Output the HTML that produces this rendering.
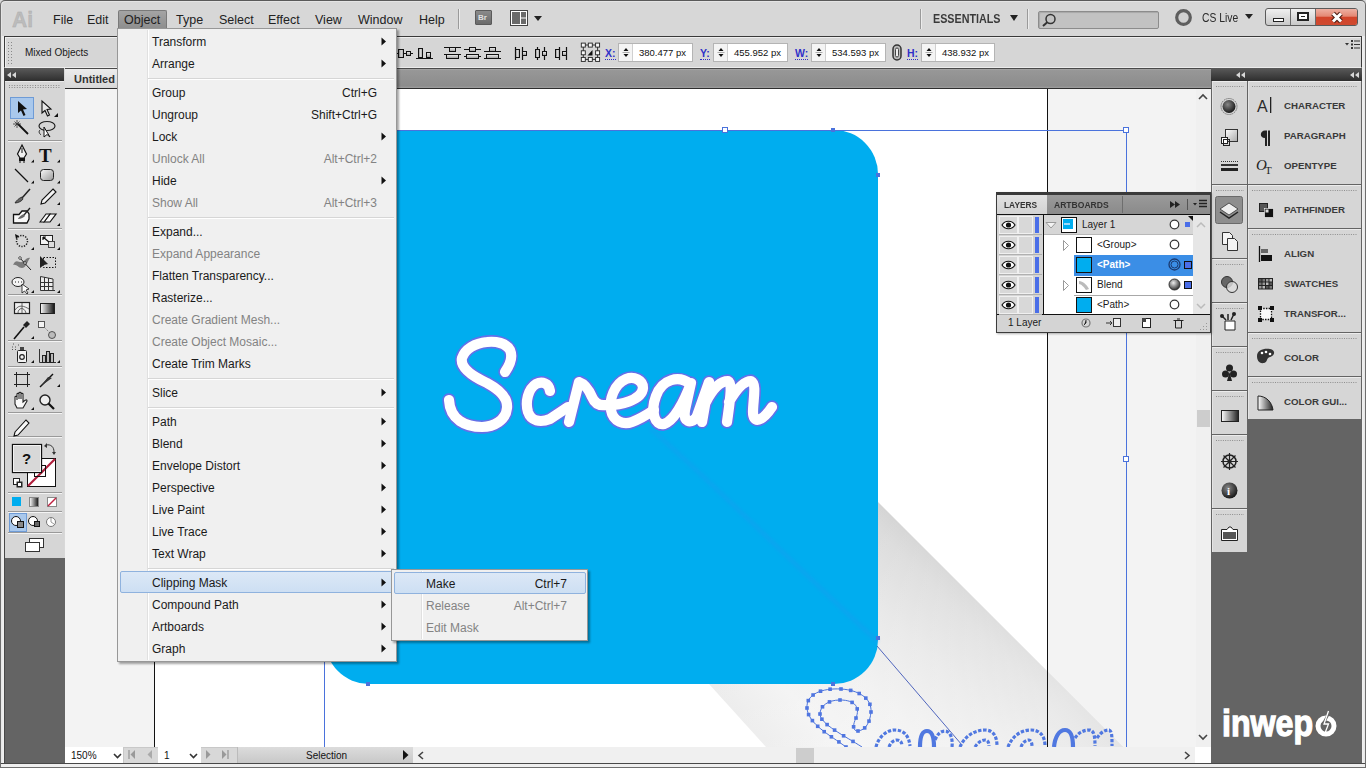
<!DOCTYPE html>
<html><head><meta charset="utf-8">
<style>
*{margin:0;padding:0;box-sizing:border-box}
html,body{width:1366px;height:768px;overflow:hidden;background:#d8d8d8;font-family:"Liberation Sans",sans-serif;font-size:12px;color:#1a1a1a}
.a{position:absolute}
.t{position:absolute;white-space:nowrap;line-height:1}
svg{position:absolute;overflow:visible}
.mt{font-size:12px;line-height:12px}
.rl{font-size:9.7px;line-height:10px;font-weight:bold;color:#3a3a3a}
/* frame */
#frame{left:0;top:0;width:1366px;height:768px;border:1px solid #6e6e6e;border-top-color:#5a5a5a;border-radius:5px 5px 0 0}
#menubar{left:1px;top:1px;width:1364px;height:35px;background:#d7d7d7;border-radius:5px 5px 0 0;box-shadow:inset 0 1px 0 #e4e4e4,inset 1px 0 0 #e4e4e4}
.mi{position:absolute;top:14px;font-size:12.5px;color:#222;line-height:13px}
#ctrl{left:4px;top:36px;width:1358px;height:32px;background:#d6d6d6;border:1px solid #3a3a3a;border-bottom:1px solid #ececec;box-shadow:inset 1px 1px 0 #eeeeee}
.fld{position:absolute;top:43px;height:19px;background:#fff;border:1px solid #b4b4b4}
.spin{position:absolute;left:0;top:0;width:14px;height:17px;border-right:1px solid #d0d0d0;background:#f4f4f4}
.fv{position:absolute;top:4px;font-size:9.5px;color:#111;line-height:10px}
.lbl{position:absolute;top:48px;font-size:10.5px;font-weight:bold;color:#3030c8;line-height:10px;border-bottom:1px dotted #3030c8;padding-bottom:1px}
#tabstrip{left:65px;top:68px;width:1146px;height:21px;background:linear-gradient(#a8a8a8 0,#979797 8%,#8c8c8c 90%,#a0a0a0 100%);border-top:1px solid #4a4a4a;border-bottom:1px solid #2e2e2e}
#tab{left:65px;top:69px;width:60px;height:19px;background:linear-gradient(#ececec,#d8d8d8)}
#ltools_hdr{left:5px;top:68px;width:59px;height:13px;background:linear-gradient(#5a5a5a,#2e2e2e)}
#ltools{left:5px;top:81px;width:59px;height:477px;background:#d6d6d6;border-top:1px solid #eaeaea}
#ldark{left:5px;top:558px;width:60px;height:205px;background:#646464}
#lstrip{left:1px;top:36px;width:4px;height:728px;background:linear-gradient(90deg,#e6e6e6,#f2f2f2);border-right:1px solid #484848}
#paste{left:65px;top:89px;width:1131px;height:658px;background:#f3f3f3}
#artboard{left:154px;top:89px;width:894px;height:658px;background:#fff;border-left:1px solid #111;border-right:1px solid #111}
#status{left:65px;top:747px;width:1146px;height:16px;background:#d8d8d8;border-top:1px solid #c8c8c8}
#rhdr{left:1211px;top:68px;width:151px;height:13px;background:linear-gradient(#5a5a5a,#2e2e2e)}
#rdark{left:1211px;top:81px;width:151px;height:682px;background:#646464}
#rstrip{left:1361px;top:36px;width:5px;height:732px;background:linear-gradient(90deg,#f2f2f2,#e6e6e6);border-left:1px solid #484848;border-right:1px solid #777}
#bstrip{left:1px;top:763px;width:1364px;height:5px;background:#efefef;border-top:1px solid #484848;border-bottom:1px solid #c8c8c8}
</style></head><body>
<div id="menubar" class="a"></div>
<div id="lstrip" class="a"></div>
<div id="rstrip" class="a"></div>
<div id="bstrip" class="a"></div>
<div id="ctrl" class="a"></div>
<div id="tabstrip" class="a"></div>
<div id="tab" class="a"></div>
<div id="ltools_hdr" class="a"></div>
<div id="ltools" class="a"></div>
<div id="ldark" class="a"></div>
<div id="paste" class="a"></div>
<div id="artboard" class="a"></div>
<div id="status" class="a"></div>
<div id="rhdr" class="a"></div>
<div id="rdark" class="a"></div>
<!--MENUBAR-->
<svg style="left:12px;top:8px" width="24" height="20" viewBox="0 0 24 20"><text x="0" y="18.5" font-family="Liberation Sans" font-weight="bold" font-size="22" fill="#bcbcbc" stroke="#aaaaaa" stroke-width="0.4" textLength="21" lengthAdjust="spacingAndGlyphs">Ai</text></svg>
<div class="mi" style="left:53px">File</div>
<div class="mi" style="left:87px">Edit</div>
<div class="a" style="left:118px;top:10px;width:49px;height:18px;background:linear-gradient(#a4a4a4,#8e8e8e);border:1px solid #7a7a7a;border-bottom:none;border-radius:2px 2px 0 0"></div>
<div class="mi" style="left:124px">Object</div>
<div class="mi" style="left:176px">Type</div>
<div class="mi" style="left:219px">Select</div>
<div class="mi" style="left:268px">Effect</div>
<div class="mi" style="left:315px">View</div>
<div class="mi" style="left:358px">Window</div>
<div class="mi" style="left:419px">Help</div>
<div class="a" style="left:458px;top:9px;width:1px;height:20px;background:#9a9a9a;box-shadow:1px 0 0 #ececec"></div>
<div class="a" style="left:475px;top:10px;width:17px;height:15px;background:linear-gradient(#8a8a8a,#6a6a6a);border:1px solid #5a5a5a;border-radius:1px"><div class="t" style="left:2px;top:3px;font-size:8px;font-weight:bold;color:#e0e0e0">Br</div></div>
<svg style="left:510px;top:10px" width="19" height="16" viewBox="0 0 19 16"><rect x="0.5" y="0.5" width="17" height="15" fill="#fff" stroke="#444"/><rect x="2" y="2" width="8" height="12" fill="#6a6a6a"/><rect x="11" y="2" width="5" height="5.5" fill="#6a6a6a"/><rect x="11" y="8.5" width="5" height="5.5" fill="#6a6a6a"/></svg>
<svg style="left:534px;top:16px" width="8" height="6" viewBox="0 0 8 6"><path d="M0 0H8L4 5Z" fill="#222"/></svg>
<div class="a" style="left:920px;top:9px;width:1px;height:20px;background:#9a9a9a;box-shadow:1px 0 0 #ececec"></div>
<div class="t" style="left:933px;top:13px;font-size:12.5px;font-weight:bold;color:#3a3a3a;transform:scaleX(0.86);transform-origin:0 0">ESSENTIALS</div>
<svg style="left:1010px;top:15px" width="8" height="7" viewBox="0 0 8 7"><path d="M0 0H8L4 6Z" fill="#222"/></svg>
<div class="a" style="left:1027px;top:9px;width:1px;height:20px;background:#9a9a9a;box-shadow:1px 0 0 #ececec"></div>
<div class="a" style="left:1038px;top:11px;width:121px;height:18px;background:#c2c2c2;border:1px solid #8c8c8c;border-radius:2px;box-shadow:inset 1px 1px 1px #a8a8a8"></div>
<svg style="left:1041px;top:13px" width="16" height="14" viewBox="0 0 16 14"><circle cx="9.5" cy="6" r="4.5" fill="none" stroke="#333" stroke-width="1.5"/><path d="M6.3 9.2L2 13" stroke="#333" stroke-width="2"/></svg>
<svg style="left:1175px;top:9px" width="18" height="17" viewBox="0 0 18 17"><circle cx="8.5" cy="8.5" r="6.8" fill="#d0d0d0" stroke="#5e5e5e" stroke-width="3.2"/></svg>
<div class="t" style="left:1202px;top:12px;font-size:12px;color:#2a2a2a;transform:scaleX(0.86);transform-origin:0 0">CS Live</div>
<svg style="left:1245px;top:14px" width="8" height="6" viewBox="0 0 8 6"><path d="M0 0H8L4 5Z" fill="#222"/></svg>
<div class="a" style="left:1265px;top:8px;width:93px;height:18px;border:1px solid #5a5a5a;border-radius:3px;overflow:hidden;background:linear-gradient(#f0f0f0,#c8c8c8)">
 <div class="a" style="left:24px;top:0;width:1px;height:16px;background:#6a6a6a"></div>
 <div class="a" style="left:49px;top:0;width:1px;height:16px;background:#6a6a6a"></div>
 <div class="a" style="left:50px;top:0;width:42px;height:16px;background:linear-gradient(#eeb0a2,#e48874 45%,#d2442a 52%,#cf4a30)"></div>
 <div class="a" style="left:7px;top:9px;width:11px;height:4px;background:#fff;border:1px solid #222"></div>
 <div class="a" style="left:31px;top:3px;width:12px;height:9px;background:#fff;border:2px solid #222"><div class="a" style="left:2px;top:2px;width:4px;height:1px;background:#222"></div></div>
 <svg style="left:64px;top:3px" width="14" height="11" viewBox="0 0 14 11"><path d="M3 1.5L11 9.5M11 1.5L3 9.5" stroke="#4a1a10" stroke-width="5"/><path d="M3 1.5L11 9.5M11 1.5L3 9.5" stroke="#fff" stroke-width="3"/></svg>
</div>

<!--CTRL-->
<svg style="left:8px;top:42px" width="6" height="22" viewBox="0 0 6 22"><g fill="#8a8a8a"><rect x="0" y="0" width="1" height="1"/><rect x="3" y="0" width="1" height="1"/><rect x="0" y="3" width="1" height="1"/><rect x="3" y="3" width="1" height="1"/><rect x="0" y="6" width="1" height="1"/><rect x="3" y="6" width="1" height="1"/><rect x="0" y="9" width="1" height="1"/><rect x="3" y="9" width="1" height="1"/><rect x="0" y="12" width="1" height="1"/><rect x="3" y="12" width="1" height="1"/><rect x="0" y="15" width="1" height="1"/><rect x="3" y="15" width="1" height="1"/><rect x="0" y="18" width="1" height="1"/><rect x="3" y="18" width="1" height="1"/><rect x="0" y="21" width="1" height="1"/><rect x="3" y="21" width="1" height="1"/></g></svg>
<div class="t" style="left:25px;top:48px;font-size:10px;color:#1a1a1a">Mixed Objects</div>
<!-- align icons -->
<svg style="left:0;top:0" width="620" height="70" viewBox="0 0 620 70">
 <defs><linearGradient id="agr" x1="0" y1="0" x2="1" y2="0"><stop offset="0" stop-color="#888"/><stop offset="0.5" stop-color="#d8d8d8"/><stop offset="1" stop-color="#aaa"/></linearGradient>
 <linearGradient id="agr2" x1="0" y1="0" x2="0" y2="1"><stop offset="0" stop-color="#f4f4f4"/><stop offset="1" stop-color="#999"/></linearGradient></defs>
 <g stroke="#111" stroke-width="1">
  <path d="M397 53.5H413"/><rect x="398.5" y="49.5" width="5" height="8" fill="url(#agr)"/><rect x="406.5" y="51.5" width="4" height="4" fill="url(#agr2)"/>
  <path d="M416 58.5H433"/><rect x="418.5" y="48.5" width="4" height="9" fill="url(#agr)"/><rect x="426.5" y="52.5" width="4" height="5" fill="url(#agr2)"/>
  <path d="M444 47.5H461M444 54.5H461" stroke-width="1.2"/><rect x="449.5" y="47.5" width="6" height="4" fill="url(#agr2)"/><rect x="446.5" y="54.5" width="12" height="4" fill="url(#agr2)"/>
  <path d="M464 49.5H481M464 56.5H481" stroke-width="1.2"/><rect x="469.5" y="47.5" width="6" height="4" fill="url(#agr2)"/><rect x="466.5" y="54.5" width="12" height="4" fill="url(#agr2)"/>
  <path d="M484 51.5H501M484 58.5H501" stroke-width="1.2"/><rect x="489.5" y="47.5" width="6" height="4" fill="url(#agr2)"/><rect x="486.5" y="54.5" width="12" height="4" fill="url(#agr2)"/>
  <path d="M515.5 47V60M522.5 47V60" stroke-width="1.2"/><rect x="515.5" y="49.5" width="4" height="8" fill="url(#agr)"/><rect x="522.5" y="51.5" width="4" height="4" fill="url(#agr2)"/>
  <path d="M537.5 47V60M544.5 47V60" stroke-width="1.2"/><rect x="535.5" y="49.5" width="4" height="8" fill="url(#agr)"/><rect x="542.5" y="51.5" width="4" height="4" fill="url(#agr2)"/>
  <path d="M559.5 47V60M566.5 47V60" stroke-width="1.2"/><rect x="555.5" y="49.5" width="4" height="8" fill="url(#agr)"/><rect x="562.5" y="51.5" width="4" height="4" fill="url(#agr2)"/>
 </g>
 <path d="M583 45H598M583 59.4H598M583.3 45V59.4M597.6 45V59.4" stroke="#333" stroke-width="1"/>
 <g fill="#f8f8f8" stroke="#222" stroke-width="0.9">
  <rect x="581.3" y="43.1" width="4" height="4"/><rect x="588.3" y="43.1" width="4" height="4"/><rect x="595.6" y="43.1" width="4" height="4"/>
  <rect x="581.3" y="50.8" width="4" height="4"/><rect x="595.6" y="50.8" width="4" height="4"/>
  <rect x="581.3" y="57.4" width="4" height="4"/><rect x="588.3" y="57.4" width="4" height="4"/><rect x="595.6" y="57.4" width="4" height="4"/>
 </g>
 <path d="M587.5 55.5L592.5 50L592.5 55.5Z" fill="#111"/>
</svg>
<div class="lbl" style="left:605px">X:</div>
<div class="fld" style="left:618px;width:75px"><div class="spin"><svg style="left:3px;top:2px" width="8" height="13" viewBox="0 0 8 13"><path d="M1.5 5L4 2L6.5 5ZM1.5 8L4 11L6.5 8Z" fill="#111"/><path d="M0.5 6.5H7.5" stroke="#999" stroke-width="0.8"/></svg></div><div class="fv" style="left:20px">380.477 px</div></div>
<div class="lbl" style="left:700px">Y:</div>
<div class="fld" style="left:713px;width:75px"><div class="spin"><svg style="left:3px;top:2px" width="8" height="13" viewBox="0 0 8 13"><path d="M1.5 5L4 2L6.5 5ZM1.5 8L4 11L6.5 8Z" fill="#111"/><path d="M0.5 6.5H7.5" stroke="#999" stroke-width="0.8"/></svg></div><div class="fv" style="left:20px">455.952 px</div></div>
<div class="lbl" style="left:795px">W:</div>
<div class="fld" style="left:811px;width:75px"><div class="spin"><svg style="left:3px;top:2px" width="8" height="13" viewBox="0 0 8 13"><path d="M1.5 5L4 2L6.5 5ZM1.5 8L4 11L6.5 8Z" fill="#111"/><path d="M0.5 6.5H7.5" stroke="#999" stroke-width="0.8"/></svg></div><div class="fv" style="left:20px">534.593 px</div></div>
<svg style="left:892px;top:44px" width="10" height="17" viewBox="0 0 10 17"><rect x="1" y="1" width="8" height="15" rx="4" fill="#bbb" stroke="#333" stroke-width="1.5"/><rect x="3.5" y="4" width="3" height="9" rx="1.5" fill="#eee" stroke="#444"/></svg>
<div class="lbl" style="left:907px">H:</div>
<div class="fld" style="left:921px;width:74px"><div class="spin"><svg style="left:3px;top:2px" width="8" height="13" viewBox="0 0 8 13"><path d="M1.5 5L4 2L6.5 5ZM1.5 8L4 11L6.5 8Z" fill="#111"/><path d="M0.5 6.5H7.5" stroke="#999" stroke-width="0.8"/></svg></div><div class="fv" style="left:20px">438.932 px</div></div>
<svg style="left:1345px;top:40px" width="15" height="9" viewBox="0 0 15 9"><path d="M0 3H4L2 5.5Z" fill="#333"/><g fill="#333"><rect x="6" y="0" width="2" height="2"/><rect x="6" y="3.5" width="2" height="2"/><rect x="6" y="7" width="2" height="2"/><rect x="9" y="0.5" width="6" height="1"/><rect x="9" y="4" width="6" height="1"/><rect x="9" y="7.5" width="6" height="1"/></g></svg>

<!--TOOLS-->
<svg style="left:7px;top:72px" width="9" height="6" viewBox="0 0 9 6"><path d="M4 0V6L0 3ZM9 0V6L5 3Z" fill="#d8d8d8"/></svg>
<svg style="left:0;top:0" width="70" height="560" viewBox="0 0 70 560">
 <g fill="#8c8c8c">
  <path d="M9 85.5H61" stroke="#8a8a8a" stroke-dasharray="1 1.6" stroke-width="1"/>
  <path d="M9 87.5H61" stroke="#8a8a8a" stroke-dasharray="1 1.6" stroke-width="1"/>
 </g>
 <!-- separators -->
 <g stroke="#9a9a9a" stroke-width="1"><path d="M8 140.5H62M8 228.5H62M8 294.5H62M8 340.5H62M8 366.5H62M8 412.5H62M8 436.5H62M8 492.5H62M8 511.5H62M8 532.5H62"/></g>
 <g stroke="#f4f4f4" stroke-width="1"><path d="M8 141.5H62M8 229.5H62M8 295.5H62M8 341.5H62M8 367.5H62M8 413.5H62M8 437.5H62M8 493.5H62M8 512.5H62M8 533.5H62"/></g>
 <!-- selection highlight -->
 <rect x="10.5" y="97.5" width="23" height="21" fill="#a9c8ec" stroke="#6e9bd6"/>
 <!-- selection arrow -->
 <path d="M18 101L18 113L21 110.5L23.5 116L25.5 115L23 109.5L27 109Z" fill="#111"/>
 <!-- direct selection -->
 <path d="M42 101L42 113L45 110.5L47.5 116L49.5 115L47 109.5L51 109Z" fill="#e8e8e8" stroke="#111" stroke-width="1.1"/>
 <path d="M58 113V117H54Z" fill="#111"/>
 <!-- magic wand -->
 <path d="M18 124L28 134" stroke="#111" stroke-width="1.8"/>
 <path d="M17 120V128M13 124H21M14.5 121.5L19.5 126.5M19.5 121.5L14.5 126.5" stroke="#333" stroke-width="0.8"/>
 <!-- lasso -->
 <ellipse cx="47" cy="126" rx="8" ry="4.5" fill="none" stroke="#222" stroke-width="1.2"/>
 <path d="M44 127L44 137L47 134.5L50 137Z" fill="#fff" stroke="#111"/>
 <path d="M40 130C38 132 40 134 41 135" fill="none" stroke="#222"/>
 <!-- pen -->
 <path d="M22 145L26.5 154L24 158H20L17.5 154Z" fill="#f0f0f0" stroke="#111" stroke-width="1.2"/>
 <path d="M22 148V153" stroke="#111"/><path d="M19 158H25V161H19Z" fill="#111"/><path d="M20 161V163M24 161V163" stroke="#111"/>
 <path d="M34 159.5V162.5H31Z" fill="#111"/>
 <!-- type T -->
 <text x="39" y="161.5" font-family="Liberation Serif" font-weight="bold" font-size="19" fill="#111">T</text>
 <path d="M60 159.5V162.5H57Z" fill="#111"/>
 <!-- line -->
 <path d="M15 169L28 182" stroke="#111" stroke-width="1.3"/><path d="M34 180.5V183.5H31Z" fill="#111"/>
 <!-- rect -->
 <defs><linearGradient id="gr1" x1="0" y1="0" x2="1" y2="1"><stop offset="0" stop-color="#fafafa"/><stop offset="1" stop-color="#999"/></linearGradient>
 <linearGradient id="gr2" x1="0" y1="0" x2="1" y2="0"><stop offset="0" stop-color="#fff"/><stop offset="1" stop-color="#111"/></linearGradient></defs>
 <rect x="40.5" y="169.5" width="13" height="11" rx="3" fill="url(#gr1)" stroke="#222"/>
 <path d="M60 180.5V183.5H57Z" fill="#111"/>
 <!-- paintbrush -->
 <path d="M30 189L22 198" stroke="#222" stroke-width="1.5"/><path d="M22 197C19 198 16 201 15 203C18 203 22 201 23 199Z" fill="#666" stroke="#222" stroke-width="0.8"/>
 <!-- pencil -->
 <path d="M53 189L56 192L45 203L41 204L42 200Z" fill="#f4f4f4" stroke="#111" stroke-width="1.1"/>
 <path d="M60 202V205H57Z" fill="#111"/>
 <!-- blob brush -->
 <path d="M13.5 214.5H19L22 211H27L29 214V219L27 223H13.5Z" fill="#f8f8f8" stroke="#111" stroke-width="1.3"/>
 <path d="M30 208L24 215" stroke="#222" stroke-width="1.3"/><path d="M24 214C21 215 18 218 18 219C21 219 24 217 25 216Z" fill="#666"/>
 <!-- eraser -->
 <path d="M44 222L50 214H56L50 222Z" fill="#f8f8f8" stroke="#111" stroke-width="1.2"/><path d="M40 222L46 214H50L44 222Z" fill="#f8f8f8" stroke="#111" stroke-width="1.1"/>
 <path d="M60 223V226H57Z" fill="#111"/>
 <!-- rotate -->
 <circle cx="22" cy="241" r="5.5" fill="none" stroke="#222" stroke-width="1.5" stroke-dasharray="1.3 1.3"/>
 <path d="M15 234L19 236L16 239Z" fill="#111"/>
 <path d="M34 247V250H31Z" fill="#111"/>
 <!-- scale -->
 <rect x="40.5" y="235.5" width="12" height="9" fill="#f4f4f4" stroke="#222"/><rect x="48.5" y="241.5" width="6" height="6" fill="#ddd" stroke="#444"/><path d="M43 237L49 242M43 237V240M43 237H46" stroke="#111" stroke-width="1.2" fill="none"/>
 <path d="M60 247V250H57Z" fill="#111"/>
 <!-- warp -->
 <path d="M13 265C16 258 19 263 22 262C25 261 27 257 30 258C27 262 26 268 22 268C18 268 17 264 13 265Z" fill="#7a7a7a"/>
 <path d="M19 257L31 270" stroke="#222"/><circle cx="20" cy="258" r="1.3" fill="#fff" stroke="#111" stroke-width="0.7"/><circle cx="25" cy="263" r="1.3" fill="#fff" stroke="#111" stroke-width="0.7"/>
 <!-- free transform -->
 <rect x="43.5" y="257.5" width="12" height="10" fill="none" stroke="#111" stroke-dasharray="1.5 1.5"/>
 <path d="M40 256L40 268L44 265L48 264Z" fill="#222"/>
 <!-- symbol sprayer -->
 <ellipse cx="18" cy="282" rx="6" ry="4.5" fill="#f4f4f4" stroke="#222"/><path d="M15 282H16M18 282H19M21 282H22" stroke="#222"/>
 <path d="M22 284L22 293L24.5 291L27 294L28 293L26 290L29 289Z" fill="#fff" stroke="#111" stroke-width="0.8"/>
 <path d="M34 290V293H31Z" fill="#111"/>
 <!-- graph -->
 <path d="M40.5 276.5V290.5H55M40.5 276.5L53 279V290M44.5 277V290M48.5 278V290M40.5 282.5H53M40.5 286.5H53" stroke="#333" stroke-width="1" fill="#eee"/>
 <path d="M60 290V293H57Z" fill="#111"/>
 <!-- mesh -->
 <rect x="14.5" y="302.5" width="15" height="11" fill="#f0f0f0" stroke="#222" stroke-width="1.2"/>
 <path d="M15 310C19 304 24 306 29 309M22 303V313M18 313C18 308 24 306 26 313" stroke="#444" stroke-width="0.8" fill="none"/>
 <!-- gradient -->
 <rect x="40.5" y="303.5" width="14" height="10" fill="url(#gr2)" stroke="#222"/>
 <!-- eyedropper -->
 <path d="M14 339L24 327" stroke="#111" stroke-width="1.6"/><path d="M23 325L27 321L30 324L26 328Z" fill="#222"/>
 <path d="M34 336V339H31Z" fill="#111"/>
 <!-- blend -->
 <rect x="38.5" y="321.5" width="6" height="6" fill="#f4f4f4" stroke="#333" stroke-width="0.8"/>
 <path d="M44 327L50 333" stroke="#666" stroke-width="1" stroke-dasharray="1 1.3"/>
 <circle cx="52" cy="335" r="3.5" fill="#bbb" stroke="#333" stroke-width="0.8"/>
 <!-- symbol sprayer2 -->
 <rect x="17.5" y="350.5" width="9" height="12" rx="1" fill="#f2f2f2" stroke="#222"/><circle cx="22" cy="357" r="2.3" fill="none" stroke="#222" stroke-width="1.2"/><rect x="20" y="347" width="4" height="3" fill="#444"/>
 <path d="M12 347H13M15 347H16M12 349.5H13M15 349.5H16M18 345H19M13 344H14" stroke="#555"/>
 <path d="M34 360V363H31Z" fill="#111"/>
 <!-- column graph -->
 <path d="M39.5 349V362.5H56"  stroke="#333" stroke-width="1" fill="none"/><rect x="42.5" y="355.5" width="3" height="7" fill="#bbb" stroke="#222"/><rect x="46.5" y="351.5" width="3" height="11" fill="#bbb" stroke="#222"/><rect x="50.5" y="353.5" width="3" height="9" fill="#bbb" stroke="#222"/>
 <path d="M60 360V363H57Z" fill="#111"/>
 <!-- artboard -->
 <rect x="16.5" y="374.5" width="11" height="10" fill="none" stroke="#222"/><path d="M14 374.5H16M28 374.5H30M14 384.5H16M28 384.5H30M16.5 372V374M27.5 372V374M16.5 385V387M27.5 385V387" stroke="#222"/>
 <!-- slice -->
 <path d="M40 387L53 374" stroke="#111" stroke-width="1.4"/><path d="M41 386L48 377L52 378Z" fill="#333"/>
 <path d="M60 384V387H57Z" fill="#111"/>
 <!-- hand -->
 <path d="M15 401V397C15 396 17 396 17 397V400V394C17 393 19 393 19 394V399V393C19 392 21 392 21 393V399V394C21 393 23 393 23 394V402C25 400 27 399 27 401L23 408H17L15 404Z" fill="#fafafa" stroke="#222" stroke-width="1.1"/>
 <path d="M34 407V410H31Z" fill="#111"/>
 <!-- zoom -->
 <circle cx="45" cy="400" r="5" fill="#eee" stroke="#222" stroke-width="1.4"/><path d="M48.5 403.5L54 409" stroke="#111" stroke-width="2.2"/>
 <!-- measure/eyedropper -->
 <path d="M15 432L26 420L29 423L18 435L14 436Z" fill="#f8f8f8" stroke="#111" stroke-width="1.1"/>
 <!-- fill/stroke -->
 <rect x="27.5" y="458.5" width="28" height="28" fill="#fff" stroke="#111"/>
 <path d="M28 486L55 459" stroke="#b01e3c" stroke-width="2.2"/>
 <rect x="34.5" y="465.5" width="11" height="11" fill="none" stroke="#111"/>
 <rect x="12.5" y="444.5" width="29" height="28" fill="#d8d8d8" stroke="#111" stroke-width="1.3"/><rect x="13.5" y="445.5" width="27" height="26" fill="none" stroke="#f2f2f2" stroke-width="1"/>
 <text x="22" y="464" font-family="Liberation Sans" font-weight="bold" font-size="15" fill="#111">?</text>
 <path d="M46 445C51 444 54 447 54 452" fill="none" stroke="#333" stroke-width="1"/><path d="M44 446L47 443L47 448ZM52 452L56 452L54 455Z" fill="#333"/>
 <rect x="13.5" y="478.5" width="6" height="6" fill="#fff" stroke="#222"/><rect x="16.5" y="481.5" width="6" height="6" fill="#222"/><rect x="18" y="483" width="3" height="3" fill="#fff"/>
 <!-- color modes -->
 <rect x="12" y="497" width="9" height="9" fill="#00adef"/>
 <rect x="29.5" y="497.5" width="9" height="9" fill="url(#gr2)" stroke="#888"/>
 <rect x="47.5" y="497.5" width="9" height="9" fill="#fff" stroke="#888"/><path d="M48 506L56 498" stroke="#c02040" stroke-width="1.5"/>
 <!-- draw modes -->
 <rect x="9.5" y="513.5" width="17" height="18" fill="#a9c8ec" stroke="#6e9bd6"/>
 <circle cx="16" cy="521" r="4.5" fill="#fff" stroke="#111"/><rect x="17.5" y="521.5" width="6" height="6" fill="#888" stroke="#111"/>
 <circle cx="33" cy="521" r="4.5" fill="#fff" stroke="#111"/><rect x="34.5" y="521.5" width="5" height="5" fill="#666" stroke="#111"/>
 <circle cx="51" cy="522" r="4.5" fill="#fff" stroke="#777"/><path d="M51 518V522L54 524" stroke="#999" fill="none"/>
 <!-- screen mode -->
 <rect x="29.5" y="538.5" width="14" height="9" fill="#fff" stroke="#333"/><rect x="25.5" y="542.5" width="14" height="9" fill="#fff" stroke="#333"/>
</svg>

<!--CANVAS-->
<div class="t" style="left:74px;top:74px;font-size:11px;font-weight:bold;color:#333">Untitled</div>
<svg style="left:0;top:0" width="1366" height="768" viewBox="0 0 1366 768">
 <defs>
  <filter id="bl1" x="-10%" y="-10%" width="120%" height="120%"><feGaussianBlur stdDeviation="1.5"/></filter>
  <clipPath id="cv"><rect x="65" y="89" width="1131" height="658"/></clipPath>
  <linearGradient id="shg" gradientUnits="userSpaceOnUse" x1="960" y1="584" x2="785" y2="759">
   <stop offset="0" stop-color="#d4d4d4"/><stop offset="0.08" stop-color="#dbdbdb"/><stop offset="0.3" stop-color="#e6e6e6"/><stop offset="0.55" stop-color="#efefef"/><stop offset="0.8" stop-color="#f3f3f3"/><stop offset="1" stop-color="#ececec"/>
  </linearGradient>
  <linearGradient id="shg2" gradientUnits="userSpaceOnUse" x1="878" y1="502" x2="1070" y2="694">
   <stop offset="0" stop-color="#fff" stop-opacity="0"/><stop offset="1" stop-color="#fff" stop-opacity="0.4"/>
  </linearGradient>
 </defs>
 <g clip-path="url(#cv)">
  <path d="M878 502L1123 747H766L709 684H820L878 620Z" fill="url(#shg)"/>
  <path d="M878 502L1123 747H766L709 684H820L878 620Z" fill="url(#shg2)"/>
  <rect x="1047" y="89" width="1" height="658" fill="#111"/>
  <rect x="325" y="130" width="553" height="554" rx="44" ry="44" fill="#00adef"/>
  <path d="M650 428C720 490 800 570 878 642" fill="none" stroke="#2a8ef0" stroke-width="5" opacity="0.22" filter="url(#bl1)"/>
  <path d="M877 646L962 745" stroke="#3d56b8" stroke-width="0.9"/>
  <!-- bbox -->
  <path d="M324.5 130.5H1126.5V760M324.5 130V760" fill="none" stroke="#4a72dc" stroke-width="1"/>
  <g fill="#fff" stroke="#4a72dc" stroke-width="1"><rect x="722.5" y="127.5" width="5" height="5"/><rect x="1123.5" y="127.5" width="5" height="5"/><rect x="1123.5" y="456.5" width="5" height="5"/></g>
  <g fill="#4a72dc"><rect x="831" y="128" width="4" height="4"/><rect x="876" y="173" width="4" height="4"/><rect x="876" y="636" width="4" height="4"/><rect x="831" y="682" width="4" height="4"/><rect x="366" y="682" width="4" height="4"/></g>
  <!-- Scream text -->
  <g fill="none" stroke-linecap="round" stroke-linejoin="round">
   <g id="scr" >
    <path d="M505 372C510 365 513 357 510 350C506 343 496 341 487 342C475 343 465 349 462 358C460 367 470 375 487 383C500 390 508 398 507 408C506 420 494 427 482 427C466 427 450 420 449 400"/>
    <path d="M550 391C549 383 542 381 536 384C528 389 525 402 528 412C531 421 540 423 550 419L568 407"/>
    <path d="M569 422L579 382C585 384 589 390 592 397C595 404 600 406 606 405"/>
    <path d="M604 405C620 406 642 400 643 388C643 380 634 376 626 379C614 384 609 400 611 410C613 422 624 425 632 422C640 419 645 416 654 410"/>
    <path d="M690 384C679 375 662 379 656 396C650 412 655 426 664 424C674 421 684 402 691 383L685 410C683 422 690 425 698 416"/>
    <path d="M697 416L709 382L702 422M706 402C712 390 720 381 728 381C733 383 730 400 727 422M729 402C736 390 744 381 751 381C757 384 753 400 753 412C753 424 762 422 772 407"/>
   </g>
  </g>
  <use href="#scr" stroke="#6470e8" stroke-width="13.4" fill="none" stroke-linecap="round" stroke-linejoin="round" stroke-dasharray="1.6 1.4"/>
  <use href="#scr" stroke="#fff" stroke-width="10.2" fill="none" stroke-linecap="round" stroke-linejoin="round"/>
  <!-- bottom scream outlines -->
  <g fill="none" stroke="#4a72dc" stroke-width="1"><path d="M846 747C830 735 808 724 807 708C806 694 822 688 841 689C858 690 872 698 871 712C870 722 866 730 858 731C852 731 853 724 856 718C860 708 856 700 840 700C828 700 820 706 820 714C820 724 845 736 862 747"/></g>
  <g fill="#4f75e0"><rect x="844.2" y="745.2" width="3.6" height="3.6"/><rect x="837.1" y="740.1" width="3.6" height="3.6"/><rect x="829.6" y="735.0" width="3.6" height="3.6"/><rect x="822.4" y="729.9" width="3.6" height="3.6"/><rect x="815.9" y="724.5" width="3.6" height="3.6"/><rect x="810.6" y="718.8" width="3.6" height="3.6"/><rect x="806.8" y="712.8" width="3.6" height="3.6"/><rect x="805.2" y="706.2" width="3.6" height="3.6"/><rect x="806.5" y="698.8" width="3.6" height="3.6"/><rect x="811.3" y="693.2" width="3.6" height="3.6"/><rect x="818.7" y="689.4" width="3.6" height="3.6"/><rect x="828.3" y="687.4" width="3.6" height="3.6"/><rect x="839.2" y="687.2" width="3.6" height="3.6"/><rect x="848.9" y="688.6" width="3.6" height="3.6"/><rect x="857.4" y="691.7" width="3.6" height="3.6"/><rect x="864.0" y="696.3" width="3.6" height="3.6"/><rect x="868.1" y="702.5" width="3.6" height="3.6"/><rect x="869.2" y="710.2" width="3.6" height="3.6"/><rect x="867.2" y="719.3" width="3.6" height="3.6"/><rect x="862.9" y="726.1" width="3.6" height="3.6"/><rect x="856.2" y="729.2" width="3.6" height="3.6"/><rect x="851.8" y="725.0" width="3.6" height="3.6"/><rect x="854.2" y="716.2" width="3.6" height="3.6"/><rect x="855.4" y="707.1" width="3.6" height="3.6"/><rect x="850.3" y="700.6" width="3.6" height="3.6"/><rect x="838.2" y="698.2" width="3.6" height="3.6"/><rect x="827.7" y="700.1" width="3.6" height="3.6"/><rect x="820.7" y="705.0" width="3.6" height="3.6"/><rect x="818.2" y="712.2" width="3.6" height="3.6"/><rect x="820.1" y="717.4" width="3.6" height="3.6"/><rect x="825.3" y="722.8" width="3.6" height="3.6"/><rect x="832.8" y="728.3" width="3.6" height="3.6"/><rect x="841.8" y="734.0" width="3.6" height="3.6"/><rect x="851.2" y="739.6" width="3.6" height="3.6"/></g>
  <g fill="none" stroke="#5078e0" stroke-width="3.2" stroke-dasharray="3.4 1.6">
   <path d="M876 747C878 738 886 730 895 730C903 730 909 735 910 746"/>
   <path d="M889 747C891 742 894 740 897 740C900 740 902 742 902 746"/>
   <path d="M952 747C953 738 950 731 945 731C940 731 937 735 935 740"/>
   <path d="M960 747C964 737 974 730 985 730C993 730 997 736 997 746"/>
   <path d="M975 747C978 742 982 740 985 740C988 740 989 743 989 746"/>
   <path d="M1008 747C1012 737 1020 730 1031 730C1039 730 1045 735 1045 746"/>
   <path d="M1021 747C1023 742 1026 740 1029 740C1031 740 1032 743 1032 746"/>
   <path d="M1075 738C1079 732 1084 730 1090 730C1094 731 1095 736 1095 746M1097 738C1101 732 1105 730 1109 730C1112 731 1112 736 1112 746"/>
  </g>
  <g fill="none" stroke="#5078e0" stroke-width="4.2">
   <path d="M920 747C920 738 922 731 927 731C932 731 934 738 934 747"/>
   <path d="M1054 747C1055 737 1059 730 1065 730C1071 730 1073 737 1073 747"/>
  </g>
 </g>
</svg>
<!-- vertical scrollbar -->
<div class="a" style="left:1196px;top:89px;width:15px;height:658px;background:#f0f0f0"></div>
<svg style="left:1198px;top:93px" width="10" height="7" viewBox="0 0 10 7"><path d="M1 6L5 2L9 6" fill="none" stroke="#444" stroke-width="1.6"/></svg>
<div class="a" style="left:1197px;top:410px;width:13px;height:17px;background:#cdcdcd"></div>
<svg style="left:1198px;top:734px" width="10" height="7" viewBox="0 0 10 7"><path d="M1 1L5 5L9 1" fill="none" stroke="#444" stroke-width="1.6"/></svg>

<!--RIGHT-->
<svg style="left:1236px;top:72px" width="9" height="6" viewBox="0 0 9 6"><path d="M4 0V6L0 3ZM9 0V6L5 3Z" fill="#d8d8d8"/></svg>
<svg style="left:1350px;top:72px" width="9" height="6" viewBox="0 0 9 6"><path d="M4 0V6L0 3ZM9 0V6L5 3Z" fill="#d8d8d8"/></svg>
<div class="a" style="left:1212px;top:81px;width:35px;height:103px;background:#d6d6d6;border-top:1px solid #ececec;border-left:1px solid #e4e4e4"></div>
<svg style="left:1216px;top:86px" width="28" height="2" viewBox="0 0 28 2"><path d="M0 0.5H28M0 1.5" stroke="#8e8e8e" stroke-dasharray="1 1.3"/></svg>
<div class="a" style="left:1212px;top:185px;width:35px;height:73px;background:#d6d6d6;border-top:1px solid #ececec;border-left:1px solid #e4e4e4"></div>
<svg style="left:1216px;top:190px" width="28" height="2" viewBox="0 0 28 2"><path d="M0 0.5H28M0 1.5" stroke="#8e8e8e" stroke-dasharray="1 1.3"/></svg>
<div class="a" style="left:1212px;top:259px;width:35px;height:43px;background:#d6d6d6;border-top:1px solid #ececec;border-left:1px solid #e4e4e4"></div>
<svg style="left:1216px;top:264px" width="28" height="2" viewBox="0 0 28 2"><path d="M0 0.5H28M0 1.5" stroke="#8e8e8e" stroke-dasharray="1 1.3"/></svg>
<div class="a" style="left:1212px;top:303px;width:35px;height:43px;background:#d6d6d6;border-top:1px solid #ececec;border-left:1px solid #e4e4e4"></div>
<svg style="left:1216px;top:308px" width="28" height="2" viewBox="0 0 28 2"><path d="M0 0.5H28M0 1.5" stroke="#8e8e8e" stroke-dasharray="1 1.3"/></svg>
<div class="a" style="left:1212px;top:347px;width:35px;height:43px;background:#d6d6d6;border-top:1px solid #ececec;border-left:1px solid #e4e4e4"></div>
<svg style="left:1216px;top:352px" width="28" height="2" viewBox="0 0 28 2"><path d="M0 0.5H28M0 1.5" stroke="#8e8e8e" stroke-dasharray="1 1.3"/></svg>
<div class="a" style="left:1212px;top:391px;width:35px;height:43px;background:#d6d6d6;border-top:1px solid #ececec;border-left:1px solid #e4e4e4"></div>
<svg style="left:1216px;top:396px" width="28" height="2" viewBox="0 0 28 2"><path d="M0 0.5H28M0 1.5" stroke="#8e8e8e" stroke-dasharray="1 1.3"/></svg>
<div class="a" style="left:1212px;top:435px;width:35px;height:73px;background:#d6d6d6;border-top:1px solid #ececec;border-left:1px solid #e4e4e4"></div>
<svg style="left:1216px;top:440px" width="28" height="2" viewBox="0 0 28 2"><path d="M0 0.5H28M0 1.5" stroke="#8e8e8e" stroke-dasharray="1 1.3"/></svg>
<div class="a" style="left:1212px;top:509px;width:35px;height:43px;background:#d6d6d6;border-top:1px solid #ececec;border-left:1px solid #e4e4e4"></div>
<svg style="left:1216px;top:514px" width="28" height="2" viewBox="0 0 28 2"><path d="M0 0.5H28M0 1.5" stroke="#8e8e8e" stroke-dasharray="1 1.3"/></svg>
<div class="a" style="left:1248px;top:81px;width:113px;height:103px;background:#d6d6d6;border-top:1px solid #ececec;border-left:1px solid #e4e4e4"></div>
<svg style="left:1252px;top:86px" width="105" height="2" viewBox="0 0 105 2"><path d="M0 0.5H105" stroke="#8e8e8e" stroke-dasharray="1 1.3"/></svg>
<div class="a" style="left:1248px;top:185px;width:113px;height:43px;background:#d6d6d6;border-top:1px solid #ececec;border-left:1px solid #e4e4e4"></div>
<svg style="left:1252px;top:190px" width="105" height="2" viewBox="0 0 105 2"><path d="M0 0.5H105" stroke="#8e8e8e" stroke-dasharray="1 1.3"/></svg>
<div class="a" style="left:1248px;top:229px;width:113px;height:103px;background:#d6d6d6;border-top:1px solid #ececec;border-left:1px solid #e4e4e4"></div>
<svg style="left:1252px;top:234px" width="105" height="2" viewBox="0 0 105 2"><path d="M0 0.5H105" stroke="#8e8e8e" stroke-dasharray="1 1.3"/></svg>
<div class="a" style="left:1248px;top:333px;width:113px;height:43px;background:#d6d6d6;border-top:1px solid #ececec;border-left:1px solid #e4e4e4"></div>
<svg style="left:1252px;top:338px" width="105" height="2" viewBox="0 0 105 2"><path d="M0 0.5H105" stroke="#8e8e8e" stroke-dasharray="1 1.3"/></svg>
<div class="a" style="left:1248px;top:377px;width:113px;height:42px;background:#d6d6d6;border-top:1px solid #ececec;border-left:1px solid #e4e4e4"></div>
<svg style="left:1252px;top:382px" width="105" height="2" viewBox="0 0 105 2"><path d="M0 0.5H105" stroke="#8e8e8e" stroke-dasharray="1 1.3"/></svg>
<div class="t rl" style="left:1284px;top:101px">CHARACTER</div>
<div class="t rl" style="left:1284px;top:131px">PARAGRAPH</div>
<div class="t rl" style="left:1284px;top:161px">OPENTYPE</div>
<div class="t rl" style="left:1284px;top:205px">PATHFINDER</div>
<div class="t rl" style="left:1284px;top:249px">ALIGN</div>
<div class="t rl" style="left:1284px;top:279px">SWATCHES</div>
<div class="t rl" style="left:1284px;top:309px">TRANSFOR...</div>
<div class="t rl" style="left:1284px;top:353px">COLOR</div>
<div class="t rl" style="left:1284px;top:397px">COLOR GUI...</div>
<svg style="left:0;top:0" width="1366" height="768" viewBox="0 0 1366 768">
 <defs>
  <radialGradient id="rg1" cx="0.4" cy="0.35" r="0.7"><stop offset="0" stop-color="#888"/><stop offset="1" stop-color="#111"/></radialGradient>
  <linearGradient id="lg1" x1="0" y1="0" x2="1" y2="1"><stop offset="0" stop-color="#fff"/><stop offset="1" stop-color="#aaa"/></linearGradient>
  <linearGradient id="lg2" x1="0" y1="0" x2="1" y2="0"><stop offset="0" stop-color="#fff"/><stop offset="1" stop-color="#222"/></linearGradient>
 </defs>
 <!-- icon col -->
 <circle cx="1229" cy="106.5" r="8" fill="none" stroke="#555" stroke-width="1" stroke-dasharray="1 1"/>
 <circle cx="1229" cy="106.5" r="6.5" fill="url(#rg1)"/>
 <rect x="1225.5" y="129.5" width="12" height="12" fill="url(#lg1)" stroke="#333"/><rect x="1221.5" y="137.5" width="6" height="6" fill="#fff" stroke="#222"/><rect x="1223.5" y="139.5" width="6" height="6" fill="none" stroke="#222"/>
 <path d="M1221 161.5H1238" stroke="#333" stroke-dasharray="1 1"/><rect x="1221" y="164" width="17" height="2" fill="#333"/><rect x="1221" y="168" width="17" height="3" fill="#222"/>
 <rect x="1215.5" y="196.5" width="27" height="27" rx="2" fill="#8e8e8e" stroke="#6a6a6a"/>
 <path d="M1229 203L1238 209L1229 215L1220 209Z" fill="#eee" stroke="#333" stroke-width="0.8"/><path d="M1220 212L1229 218L1238 212" fill="none" stroke="#222" stroke-width="1.5"/>
 <path d="M1222.5 232.5H1229.5L1232.5 235.5V244.5H1222.5Z" fill="#f4f4f4" stroke="#333"/><path d="M1227.5 238.5H1234.5L1237.5 241.5V250.5H1227.5Z" fill="#f4f4f4" stroke="#333"/>
 <circle cx="1227" cy="282" r="5.5" fill="#666" stroke="#333"/><circle cx="1232" cy="287" r="5.5" fill="#ddd" stroke="#333" fill-opacity="0.8"/>
 <path d="M1225 330H1235V321H1225Z" fill="#fff" stroke="#222"/><path d="M1228 320V314M1231 320L1234 314M1226 320L1222 316" stroke="#222" stroke-width="1.5"/><circle cx="1222" cy="316" r="2" fill="#222"/><circle cx="1234" cy="314" r="2" fill="#222"/>
 <circle cx="1229.5" cy="368" r="3.5" fill="#222"/><circle cx="1225.5" cy="374" r="3.5" fill="#222"/><circle cx="1233.5" cy="374" r="3.5" fill="#222"/><path d="M1229.5 372L1227 381H1232Z" fill="#222"/>
 <rect x="1221.5" y="410.5" width="17" height="11" fill="url(#lg2)" stroke="#222"/>
 <circle cx="1229.5" cy="461.5" r="6.5" fill="none" stroke="#222" stroke-width="1.5"/><path d="M1221 461.5H1238M1229.5 453V470M1223.5 455.5L1235.5 467.5M1235.5 455.5L1223.5 467.5" stroke="#222" stroke-width="1.2"/><circle cx="1229.5" cy="461.5" r="2" fill="#222"/>
 <circle cx="1229.5" cy="490.5" r="8" fill="url(#rg1)"/><text x="1227" y="495" font-family="Liberation Serif" font-weight="bold" font-size="11" fill="#fff">i</text>
 <path d="M1221.5 529.5H1227L1229 527H1231L1233 529.5H1237.5V540.5H1221.5Z" fill="#fff" stroke="#222"/><rect x="1223" y="532" width="13" height="7" fill="#555"/>
 <!-- label icons -->
 <text x="1257" y="112" font-family="Liberation Sans" font-size="16" fill="#2a2a2a">A</text><rect x="1270" y="97" width="1.3" height="16" fill="#222"/>
 <path d="M1265 130.5C1260 130.5 1259 138 1265 138V146H1267V130.5ZM1268 130.5H1270V146H1268Z" fill="#222"/>
 <text x="1256" y="170" font-family="Liberation Serif" font-style="italic" font-size="15" fill="#222">O</text><text x="1265" y="174" font-family="Liberation Serif" font-size="11" fill="#222">T</text>
 <rect x="1259.5" y="203.5" width="8" height="8" fill="#555" stroke="#222"/><rect x="1264.5" y="208.5" width="9" height="9" fill="#111" stroke="#fff" stroke-width="0.6"/><rect x="1265.5" y="209.5" width="3" height="3" fill="#ddd"/>
 <path d="M1259.5 246V262" stroke="#111" stroke-width="1.3"/><rect x="1261" y="249" width="7" height="4" fill="#666"/><rect x="1261" y="255" width="11" height="6" fill="#111"/>
 <rect x="1258" y="278" width="15" height="11.5" fill="#222"/><rect x="1259.0" y="279.0" width="2.5" height="2.5" fill="#555"/><rect x="1259.0" y="282.5" width="2.5" height="2.5" fill="#777"/><rect x="1259.0" y="286.0" width="2.5" height="2.5" fill="#999"/><rect x="1262.5" y="279.0" width="2.5" height="2.5" fill="#777"/><rect x="1262.5" y="282.5" width="2.5" height="2.5" fill="#999"/><rect x="1262.5" y="286.0" width="2.5" height="2.5" fill="#bbb"/><rect x="1266.0" y="279.0" width="2.5" height="2.5" fill="#999"/><rect x="1266.0" y="282.5" width="2.5" height="2.5" fill="#bbb"/><rect x="1266.0" y="286.0" width="2.5" height="2.5" fill="#555"/><rect x="1269.5" y="279.0" width="2.5" height="2.5" fill="#bbb"/><rect x="1269.5" y="282.5" width="2.5" height="2.5" fill="#555"/><rect x="1269.5" y="286.0" width="2.5" height="2.5" fill="#777"/>
 <rect x="1260.5" y="308.5" width="11" height="11" fill="#fafafa" stroke="#111" stroke-dasharray="1.5 1.2" stroke-width="1.3"/><g fill="#111"><rect x="1258" y="306" width="4" height="4"/><rect x="1270" y="306" width="4" height="4"/><rect x="1258" y="318" width="4" height="4"/><rect x="1270" y="318" width="4" height="4"/></g>
 <path d="M1257 356C1257 350 1264 348 1270 349C1276 350 1275 356 1270 357C1266 358 1268 362 1264 363C1259 364 1257 360 1257 356Z" fill="#333"/><circle cx="1262" cy="353" r="1.3" fill="#fff"/><circle cx="1266" cy="352" r="1.3" fill="#fff"/><circle cx="1270" cy="354" r="1.3" fill="#fff"/>
 <path d="M1258 396C1266 396 1272 402 1273 410H1258Z" fill="url(#lg2)" stroke="#222"/>
</svg>
<!--LAYERS-->
<div class="a" style="left:996px;top:192px;width:215px;height:141px;background:#d4d4d4;border:1px solid #3c3c3c;border-top:3px solid #3a3a3a;box-shadow:1px 1px 2px rgba(0,0,0,0.3)"></div>
<div class="a" style="left:997px;top:195px;width:213px;height:19px;background:linear-gradient(#9a9a9a,#8a8a8a)"></div>
<div class="a" style="left:997px;top:195px;width:50px;height:19px;background:linear-gradient(#e2e2e2,#d2d2d2)"></div>
<div class="a" style="left:1122px;top:196px;width:1px;height:17px;background:#6e6e6e"></div>
<div class="t" style="left:1004px;top:200px;font-size:9.5px;font-weight:bold;color:#333;transform:scaleX(0.88);transform-origin:0 0">LAYERS</div>
<div class="t" style="left:1054px;top:200px;font-size:9.5px;font-weight:bold;color:#333;transform:scaleX(0.9);transform-origin:0 0">ARTBOARDS</div>
<svg style="left:1170px;top:201px" width="10" height="7" viewBox="0 0 10 7"><path d="M0 0L5 3.5L0 7ZM5 0L10 3.5L5 7Z" fill="#222"/></svg>
<div class="a" style="left:1187px;top:199px;width:1px;height:11px;background:#555"></div>
<svg style="left:1193px;top:199px" width="15" height="10" viewBox="0 0 15 10"><path d="M0 4H4L2 6.5Z" fill="#222"/><path d="M6 1.5H14M6 4.5H14M6 7.5H14" stroke="#222" stroke-width="1.3"/></svg>
<div class="a" style="left:997px;top:214px;width:213px;height:1px;background:#111"></div>
<!-- list area -->
<div class="a" style="left:997px;top:215px;width:46px;height:99px;background:#d4d4d4"></div>
<div class="a" style="left:1043px;top:215px;width:1px;height:99px;background:#111"></div>
<div class="a" style="left:1044px;top:215px;width:149px;height:99px;background:#fff"></div>
<div class="a" style="left:1193px;top:215px;width:17px;height:99px;background:#e6e6e6"></div>
<div class="a" style="left:1044px;top:215px;width:149px;height:20px;background:#d6d6d6;border-bottom:1px solid #b8b8b8"></div>
<div class="a" style="left:1074px;top:255px;width:119px;height:21px;background:#3b8ee6"></div>
<div class="a" style="left:1074px;top:295px;width:119px;height:1px;background:#a8a8a8"></div>
<div class="a" style="left:997px;top:314px;width:213px;height:1px;background:#111"></div>
<svg style="left:0;top:0" width="1366" height="768" viewBox="0 0 1366 768">
 <defs><radialGradient id="rg2" cx="0.4" cy="0.35" r="0.7"><stop offset="0" stop-color="#eee"/><stop offset="1" stop-color="#222"/></radialGradient></defs>
 <g id="eyerow">
  <rect x="999.5" y="216.5" width="18" height="17" fill="#d8d8d8" stroke="#f0f0f0"/>
  <rect x="1018.5" y="216.5" width="14" height="17" fill="#d8d8d8" stroke="#f0f0f0"/>
  <rect x="1035" y="217" width="4" height="16" fill="#4a6ee8"/>
  <path d="M1002 225C1005 220 1012 220 1015 225C1012 230 1005 230 1002 225Z" fill="#fff" stroke="#111" stroke-width="1.2"/><circle cx="1008.5" cy="225" r="2.6" fill="#111"/>
  <path d="M999 234.5H1042" stroke="#b0b0b0"/>
 </g>
 <use href="#eyerow" y="20"/><use href="#eyerow" y="40"/><use href="#eyerow" y="60"/><use href="#eyerow" y="80"/>
 <!-- row1 Layer 1 -->
 <path d="M1046 222.5H1056L1051 228Z" fill="#f4f4f4" stroke="#9a9a9a"/>
 <rect x="1061.5" y="217.5" width="15" height="15" fill="#fff" stroke="#111"/><rect x="1063" y="219" width="10" height="10" fill="#00adef"/><rect x="1064" y="223" width="6" height="2" fill="#9ad8f8"/>
 <circle cx="1174.5" cy="224.5" r="4.3" fill="#fff" stroke="#333" stroke-width="1.2"/>
 <rect x="1185" y="222" width="5" height="5" fill="#4a6ee8"/>
 <path d="M1188 216H1193V221Z" fill="#111"/>
 <!-- group row -->
 <path d="M1063.5 240.5V250.5L1068.5 245.5Z" fill="#fff" stroke="#9a9a9a"/>
 <rect x="1076.5" y="237.5" width="15" height="15" fill="#fff" stroke="#111"/>
 <circle cx="1174.5" cy="244.5" r="4.3" fill="#fff" stroke="#333" stroke-width="1.2"/>
 <!-- path row selected -->
 <rect x="1076.5" y="257.5" width="15" height="15" fill="#00adef" stroke="#111"/>
 <circle cx="1174.5" cy="264.5" r="5.5" fill="none" stroke="#1a3a70" stroke-width="1.3"/><circle cx="1174.5" cy="264.5" r="3.5" fill="none" stroke="#1a3a70" stroke-width="1"/>
 <rect x="1184.5" y="261.5" width="7" height="7" fill="#4a6ee8" stroke="#111"/>
 <!-- blend row -->
 <path d="M1063.5 280.5V290.5L1068.5 285.5Z" fill="#fff" stroke="#9a9a9a"/>
 <rect x="1076.5" y="277.5" width="15" height="15" fill="#fff" stroke="#111"/><path d="M1079 281C1083 281 1087 285 1089 289L1086 290C1084 287 1081 284 1079 284Z" fill="#bbb"/>
 <circle cx="1174.5" cy="284.5" r="5.5" fill="url(#rg2)" stroke="#333" stroke-width="1"/>
 <rect x="1184.5" y="281.5" width="7" height="7" fill="#4a6ee8" stroke="#111"/>
 <!-- path row 2 -->
 <rect x="1076.5" y="297.5" width="15" height="15" fill="#00adef" stroke="#111"/>
 <circle cx="1174.5" cy="304.5" r="4.3" fill="#fff" stroke="#333" stroke-width="1.2"/>
 <!-- scroll arrows -->
 <path d="M1197 227L1201 223L1205 227" fill="none" stroke="#bbb" stroke-width="1.5"/>
 <path d="M1197 304L1201 308L1205 304" fill="none" stroke="#bbb" stroke-width="1.5"/>
 <!-- footer icons -->
 <circle cx="1086" cy="323" r="4" fill="none" stroke="#777" stroke-width="1.2"/><path d="M1086 320V323L1084 325" stroke="#333"/>
 <path d="M1106 323H1112M1110 321L1112 323L1110 325" stroke="#333" fill="none"/><rect x="1113.5" y="318.5" width="7" height="8" fill="#eee" stroke="#333"/>
 <rect x="1142.5" y="318.5" width="8" height="9" fill="#fff" stroke="#222"/><rect x="1142" y="318" width="4" height="4" fill="#444"/>
 <path d="M1173.5 320.5H1183.5M1175.5 321V328H1181.5V321M1177 319H1180" stroke="#222" fill="none"/>
 <g fill="#999"><rect x="1206" y="323" width="1" height="1"/><rect x="1206" y="326" width="1" height="1"/><rect x="1206" y="329" width="1" height="1"/><rect x="1203" y="326" width="1" height="1"/><rect x="1203" y="329" width="1" height="1"/><rect x="1200" y="329" width="1" height="1"/></g>
</svg>
<div class="t" style="left:1082px;top:220px;font-size:10px;color:#1a1a1a">Layer 1</div>
<div class="t" style="left:1097px;top:240px;font-size:10px;color:#1a1a1a">&lt;Group&gt;</div>
<div class="t" style="left:1097px;top:260px;font-size:10px;font-weight:bold;color:#fff">&lt;Path&gt;</div>
<div class="t" style="left:1097px;top:280px;font-size:10px;color:#1a1a1a">Blend</div>
<div class="t" style="left:1097px;top:300px;font-size:10px;color:#1a1a1a">&lt;Path&gt;</div>
<div class="t" style="left:1008px;top:318px;font-size:10px;color:#1a1a1a">1 Layer</div>

<!--STATUS-->
<div class="a" style="left:65px;top:747px;width:59px;height:16px;background:#fff;border-right:1px solid #c8c8c8"></div>
<div class="t" style="left:71px;top:751px;font-size:10px;color:#111">150%</div>
<svg style="left:113px;top:753px" width="9" height="6" viewBox="0 0 9 6"><path d="M1 1L4.5 4.5L8 1" fill="none" stroke="#333" stroke-width="1.6"/></svg>
<svg style="left:128px;top:750px" width="30" height="10" viewBox="0 0 30 10"><path d="M1 0V9" stroke="#999" stroke-width="1.3"/><path d="M7 0L2.5 4.5L7 9Z" fill="#999"/><path d="M24 0L19.5 4.5L24 9Z" fill="#aaa"/></svg>
<div class="a" style="left:158px;top:747px;width:43px;height:16px;background:#fff"></div>
<div class="t" style="left:164px;top:751px;font-size:10px;color:#111">1</div>
<svg style="left:189px;top:753px" width="9" height="6" viewBox="0 0 9 6"><path d="M1 1L4.5 4.5L8 1" fill="none" stroke="#333" stroke-width="1.6"/></svg>
<svg style="left:205px;top:750px" width="30" height="10" viewBox="0 0 30 10"><path d="M1 0L5.5 4.5L1 9Z" fill="#999"/><path d="M17 0L21.5 4.5L17 9Z" fill="#999"/><path d="M23 0V9" stroke="#999" stroke-width="1.3"/></svg>
<div class="a" style="left:237px;top:747px;width:176px;height:16px;background:linear-gradient(#dcdcdc,#c8c8c8);border-left:1px solid #bbb"></div>
<div class="t" style="left:306px;top:751px;font-size:10px;color:#111">Selection</div>
<svg style="left:403px;top:750px" width="6" height="10" viewBox="0 0 6 10"><path d="M0 0L5.5 5L0 10Z" fill="#111"/></svg>
<div class="a" style="left:413px;top:747px;width:782px;height:16px;background:#f0f0f0"></div>
<svg style="left:417px;top:751px" width="7" height="9" viewBox="0 0 7 9"><path d="M6 1L2 4.5L6 8" fill="none" stroke="#444" stroke-width="1.6"/></svg>
<div class="a" style="left:796px;top:748px;width:18px;height:15px;background:#cdcdcd"></div>
<svg style="left:1184px;top:751px" width="7" height="9" viewBox="0 0 7 9"><path d="M1 1L5 4.5L1 8" fill="none" stroke="#444" stroke-width="1.6"/></svg>
<div class="a" style="left:1195px;top:747px;width:16px;height:16px;background:#fff"></div>
<svg style="left:1220px;top:700px" width="130" height="50" viewBox="0 0 130 50">
 <text x="2" y="36" font-family="Liberation Sans" font-weight="bold" font-size="37" fill="#fff" stroke="#fff" stroke-width="1.3" textLength="91" lengthAdjust="spacingAndGlyphs">inwep</text>
 <circle cx="106" cy="26" r="8" fill="none" stroke="#fff" stroke-width="5"/>
 <path d="M109 13L103 24H108L104 31" fill="none" stroke="#646464" stroke-width="2.6"/>
 <path d="M108.5 11L104 24H108.5L105 33" fill="none" stroke="#fff" stroke-width="1.3"/>
</svg>

<!--MENU-->
<div class="a" style="left:117px;top:28px;width:280px;height:634px;background:#f0f0f0;border:1px solid #979797;box-shadow:2px 2px 2px rgba(0,0,0,0.35)">
<div class="a" style="left:29px;top:1px;width:1px;height:630px;background:#e0e0e0;box-shadow:1px 0 0 #fff"></div>
<div class="t mt" style="left:34px;top:7px;color:#1a1a1a">Transform</div>
<svg style="left:263px;top:8px" width="6" height="9" viewBox="0 0 6 9"><path d="M0.5 0.5L5 4.5L0.5 8.5Z" fill="#111"/></svg>
<div class="t mt" style="left:34px;top:29px;color:#1a1a1a">Arrange</div>
<svg style="left:263px;top:30px" width="6" height="9" viewBox="0 0 6 9"><path d="M0.5 0.5L5 4.5L0.5 8.5Z" fill="#111"/></svg>
<div class="a" style="left:30px;top:49px;width:246px;height:1px;background:#d6d6d6;box-shadow:0 1px 0 #fff"></div>
<div class="t mt" style="left:34px;top:58px;color:#1a1a1a">Group</div>
<div class="t mt" style="right:19px;top:58px;color:#1a1a1a">Ctrl+G</div>
<div class="t mt" style="left:34px;top:80px;color:#1a1a1a">Ungroup</div>
<div class="t mt" style="right:19px;top:80px;color:#1a1a1a">Shift+Ctrl+G</div>
<div class="t mt" style="left:34px;top:102px;color:#1a1a1a">Lock</div>
<svg style="left:263px;top:103px" width="6" height="9" viewBox="0 0 6 9"><path d="M0.5 0.5L5 4.5L0.5 8.5Z" fill="#111"/></svg>
<div class="t mt" style="left:34px;top:124px;color:#838383">Unlock All</div>
<div class="t mt" style="right:19px;top:124px;color:#838383">Alt+Ctrl+2</div>
<div class="t mt" style="left:34px;top:146px;color:#1a1a1a">Hide</div>
<svg style="left:263px;top:147px" width="6" height="9" viewBox="0 0 6 9"><path d="M0.5 0.5L5 4.5L0.5 8.5Z" fill="#111"/></svg>
<div class="t mt" style="left:34px;top:168px;color:#838383">Show All</div>
<div class="t mt" style="right:19px;top:168px;color:#838383">Alt+Ctrl+3</div>
<div class="a" style="left:30px;top:188px;width:246px;height:1px;background:#d6d6d6;box-shadow:0 1px 0 #fff"></div>
<div class="t mt" style="left:34px;top:197px;color:#1a1a1a">Expand...</div>
<div class="t mt" style="left:34px;top:219px;color:#838383">Expand Appearance</div>
<div class="t mt" style="left:34px;top:241px;color:#1a1a1a">Flatten Transparency...</div>
<div class="t mt" style="left:34px;top:263px;color:#1a1a1a">Rasterize...</div>
<div class="t mt" style="left:34px;top:285px;color:#838383">Create Gradient Mesh...</div>
<div class="t mt" style="left:34px;top:307px;color:#838383">Create Object Mosaic...</div>
<div class="t mt" style="left:34px;top:329px;color:#1a1a1a">Create Trim Marks</div>
<div class="a" style="left:30px;top:349px;width:246px;height:1px;background:#d6d6d6;box-shadow:0 1px 0 #fff"></div>
<div class="t mt" style="left:34px;top:358px;color:#1a1a1a">Slice</div>
<svg style="left:263px;top:359px" width="6" height="9" viewBox="0 0 6 9"><path d="M0.5 0.5L5 4.5L0.5 8.5Z" fill="#111"/></svg>
<div class="a" style="left:30px;top:378px;width:246px;height:1px;background:#d6d6d6;box-shadow:0 1px 0 #fff"></div>
<div class="t mt" style="left:34px;top:387px;color:#1a1a1a">Path</div>
<svg style="left:263px;top:388px" width="6" height="9" viewBox="0 0 6 9"><path d="M0.5 0.5L5 4.5L0.5 8.5Z" fill="#111"/></svg>
<div class="t mt" style="left:34px;top:409px;color:#1a1a1a">Blend</div>
<svg style="left:263px;top:410px" width="6" height="9" viewBox="0 0 6 9"><path d="M0.5 0.5L5 4.5L0.5 8.5Z" fill="#111"/></svg>
<div class="t mt" style="left:34px;top:431px;color:#1a1a1a">Envelope Distort</div>
<svg style="left:263px;top:432px" width="6" height="9" viewBox="0 0 6 9"><path d="M0.5 0.5L5 4.5L0.5 8.5Z" fill="#111"/></svg>
<div class="t mt" style="left:34px;top:453px;color:#1a1a1a">Perspective</div>
<svg style="left:263px;top:454px" width="6" height="9" viewBox="0 0 6 9"><path d="M0.5 0.5L5 4.5L0.5 8.5Z" fill="#111"/></svg>
<div class="t mt" style="left:34px;top:475px;color:#1a1a1a">Live Paint</div>
<svg style="left:263px;top:476px" width="6" height="9" viewBox="0 0 6 9"><path d="M0.5 0.5L5 4.5L0.5 8.5Z" fill="#111"/></svg>
<div class="t mt" style="left:34px;top:497px;color:#1a1a1a">Live Trace</div>
<svg style="left:263px;top:498px" width="6" height="9" viewBox="0 0 6 9"><path d="M0.5 0.5L5 4.5L0.5 8.5Z" fill="#111"/></svg>
<div class="t mt" style="left:34px;top:519px;color:#1a1a1a">Text Wrap</div>
<svg style="left:263px;top:520px" width="6" height="9" viewBox="0 0 6 9"><path d="M0.5 0.5L5 4.5L0.5 8.5Z" fill="#111"/></svg>
<div class="a" style="left:30px;top:539px;width:246px;height:1px;background:#d6d6d6;box-shadow:0 1px 0 #fff"></div>
<div class="a" style="left:2px;top:542px;width:273px;height:22px;background:linear-gradient(#dce8f6,#cddff3);border:1px solid #8fb2de;border-radius:2px"></div>
<div class="t mt" style="left:34px;top:548px;color:#1a1a1a">Clipping Mask</div>
<svg style="left:263px;top:549px" width="6" height="9" viewBox="0 0 6 9"><path d="M0.5 0.5L5 4.5L0.5 8.5Z" fill="#111"/></svg>
<div class="t mt" style="left:34px;top:570px;color:#1a1a1a">Compound Path</div>
<svg style="left:263px;top:571px" width="6" height="9" viewBox="0 0 6 9"><path d="M0.5 0.5L5 4.5L0.5 8.5Z" fill="#111"/></svg>
<div class="t mt" style="left:34px;top:592px;color:#1a1a1a">Artboards</div>
<svg style="left:263px;top:593px" width="6" height="9" viewBox="0 0 6 9"><path d="M0.5 0.5L5 4.5L0.5 8.5Z" fill="#111"/></svg>
<div class="t mt" style="left:34px;top:614px;color:#1a1a1a">Graph</div>
<svg style="left:263px;top:615px" width="6" height="9" viewBox="0 0 6 9"><path d="M0.5 0.5L5 4.5L0.5 8.5Z" fill="#111"/></svg>
</div>
<div class="a" style="left:391px;top:569px;width:197px;height:72px;background:#f0f0f0;border:1px solid #979797;box-shadow:2px 2px 2px rgba(0,0,0,0.35)">
<div class="a" style="left:29px;top:1px;width:1px;height:68px;background:#e0e0e0;box-shadow:1px 0 0 #fff"></div>
<div class="a" style="left:2px;top:2px;width:192px;height:22px;background:linear-gradient(#dce8f6,#cddff3);border:1px solid #8fb2de;border-radius:2px"></div>
<div class="t mt" style="left:34px;top:8px;color:#1a1a1a">Make</div>
<div class="t mt" style="right:20px;top:8px;color:#1a1a1a">Ctrl+7</div>
<div class="t mt" style="left:34px;top:30px;color:#838383">Release</div>
<div class="t mt" style="right:20px;top:30px;color:#838383">Alt+Ctrl+7</div>
<div class="t mt" style="left:34px;top:52px;color:#838383">Edit Mask</div>
</div>
<div id="frame" class="a" style="pointer-events:none"></div>
</body></html>
